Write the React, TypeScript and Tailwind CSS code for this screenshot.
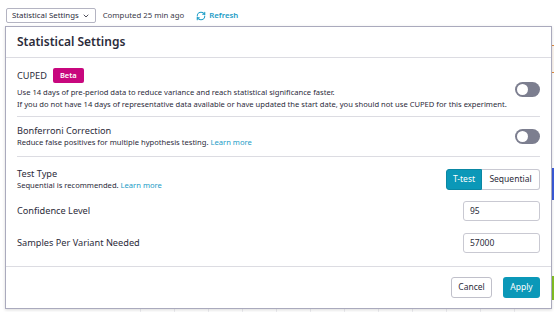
import { ChevronDown, RefreshCw } from "lucide-react";

const font = { fontFamily: '"Noto Sans", "Open Sans", sans-serif' };

function Toggle() {
    return (
        <div className="w-[25px] h-[15px] rounded-full bg-[#7c7e8f] flex items-center px-[2px]">
            <div className="w-[11px] h-[11px] rounded-full bg-white" />
        </div>
    );
}

function NumberInput({ value }: { value: string }) {
    return (
        <div className="w-[77px] h-[20px] border border-[#c9c9d2] rounded-[3px] flex items-center px-[6px] text-[8.5px] text-[#2b2b3a]">
            {value}
        </div>
    );
}

export default function App() {
    return (
        <div className="relative w-[554px] h-[312px] overflow-hidden bg-white text-[#2b2b3a]" style={font}>
            {/* stuff behind the popover */}
            <div className="absolute left-[551px] top-[45px] w-[3px] h-[28px] border-t border-b border-l border-[#e08a3c] bg-[#fdf7f1]" />
            <div className="absolute left-[552px] top-[168px] w-[2px] h-[32px] bg-[#3b5bdb]" />
            <div className="absolute left-[552px] top-[276px] w-[2px] h-[24px] bg-[#84c225]" />
            <div className="absolute left-0 top-[309px] w-[554px] h-[3px] flex">
                <div className="w-[140px]" />
                {[0, 1, 2, 3, 4, 5, 6, 7, 8, 9, 10, 11].map((i) => (
                    <div key={i} className="w-[34px] border-l border-[#ececf0]" />
                ))}
            </div>

            {/* top bar */}
            <div className="flex items-center h-[31px] pl-[6px] gap-[7px]">
                <div className="flex items-center gap-[3px] h-[15px] px-[5px] border border-[#b4b4c2] rounded-[2px] text-[7.8px] text-[#2b2b3a]">
                    Statistical Settings
                    <ChevronDown size={8} strokeWidth={2.5} />
                </div>
                <span className="text-[7.8px] text-[#3a3a48]">Computed 25 min ago</span>
                <div className="flex items-center gap-[3px] ml-[5px] text-[7.8px] font-semibold text-[#1b9cc6]">
                    <RefreshCw size={10} strokeWidth={2.5} />
                    Refresh
                </div>
            </div>

            {/* popover */}
            <div className="absolute left-[5px] top-[26px] w-[547px] h-[283px] bg-white border border-[#aaaabd] shadow-[0_1px_3px_rgba(0,0,0,0.15)] flex flex-col">
                <div className="h-[31px] px-[11px] flex items-center border-b border-[#dcdce2]">
                    <h2 className="text-[12px] font-semibold">Statistical Settings</h2>
                </div>

                <div className="px-[11px] flex flex-col">
                    <div className="flex items-center justify-between pt-[10px] pb-[6px] border-b border-[#dcdce2]">
                        <div className="flex flex-col">
                            <div className="flex items-center gap-[6px] h-[15px]">
                                <span className="text-[9.2px]">CUPED</span>
                                <span className="h-[15px] px-[7px] rounded-[2px] bg-[#c8077e] text-white text-[7.5px] font-semibold flex items-center">Beta</span>
                            </div>
                            <p className="mt-[3px] text-[7.6px] leading-[12px] text-[#2b2b3a]">
                                Use 14 days of pre-period data to reduce variance and reach statistical significance faster.
                                <br />
                                If you do not have 14 days of representative data available or have updated the start date, you should not use CUPED for this experiment.
                            </p>
                        </div>
                        <Toggle />
                    </div>

                    <div className="flex items-center justify-between pt-[7px] pb-[8px] border-b border-[#dcdce2]">
                        <div className="flex flex-col">
                            <span className="text-[9.2px] leading-[13px]">Bonferroni Correction</span>
                            <span className="text-[7.6px] leading-[11px]">
                                Reduce false positives for multiple hypothesis testing.{" "}
                                <span className="text-[#1b9cc6]">Learn more</span>
                            </span>
                        </div>
                        <Toggle />
                    </div>

                    <div className="flex items-end justify-between pt-[10px]">
                        <div className="flex flex-col">
                            <span className="text-[9.2px] leading-[13px]">Test Type</span>
                            <span className="text-[7.6px] leading-[10px]">
                                Sequential is recommended.{" "}
                                <span className="text-[#1b9cc6]">Learn more</span>
                            </span>
                        </div>
                        <div className="flex h-[21px] text-[8.5px]">
                            <div className="w-[36px] flex items-center justify-center rounded-l-[3px] bg-[#0b98b8] border border-[#0a87a3] text-white">
                                T-test
                            </div>
                            <div className="w-[58px] flex items-center justify-center rounded-r-[3px] border border-l-0 border-[#c9c9d2]">
                                Sequential
                            </div>
                        </div>
                    </div>

                    <div className="flex items-center justify-between mt-[11px]">
                        <span className="text-[9.2px]">Confidence Level</span>
                        <NumberInput value="95" />
                    </div>

                    <div className="flex items-center justify-between mt-[12px] pb-[12px]">
                        <span className="text-[9.2px]">Samples Per Variant Needed</span>
                        <NumberInput value="57000" />
                    </div>
                </div>

                <div className="mt-auto h-[42px] border-t border-[#dcdce2] px-[11px] flex items-center justify-end gap-[11px]">
                    <button className="h-[21px] w-[41px] border border-[#c0c0ca] rounded-[3px] text-[8.5px] text-[#2b2b3a] flex items-center justify-center">
                        Cancel
                    </button>
                    <button className="h-[21px] w-[37px] rounded-[3px] bg-[#0b98b8] text-white text-[8.5px] flex items-center justify-center">
                        Apply
                    </button>
                </div>
            </div>
        </div>
    );
}
